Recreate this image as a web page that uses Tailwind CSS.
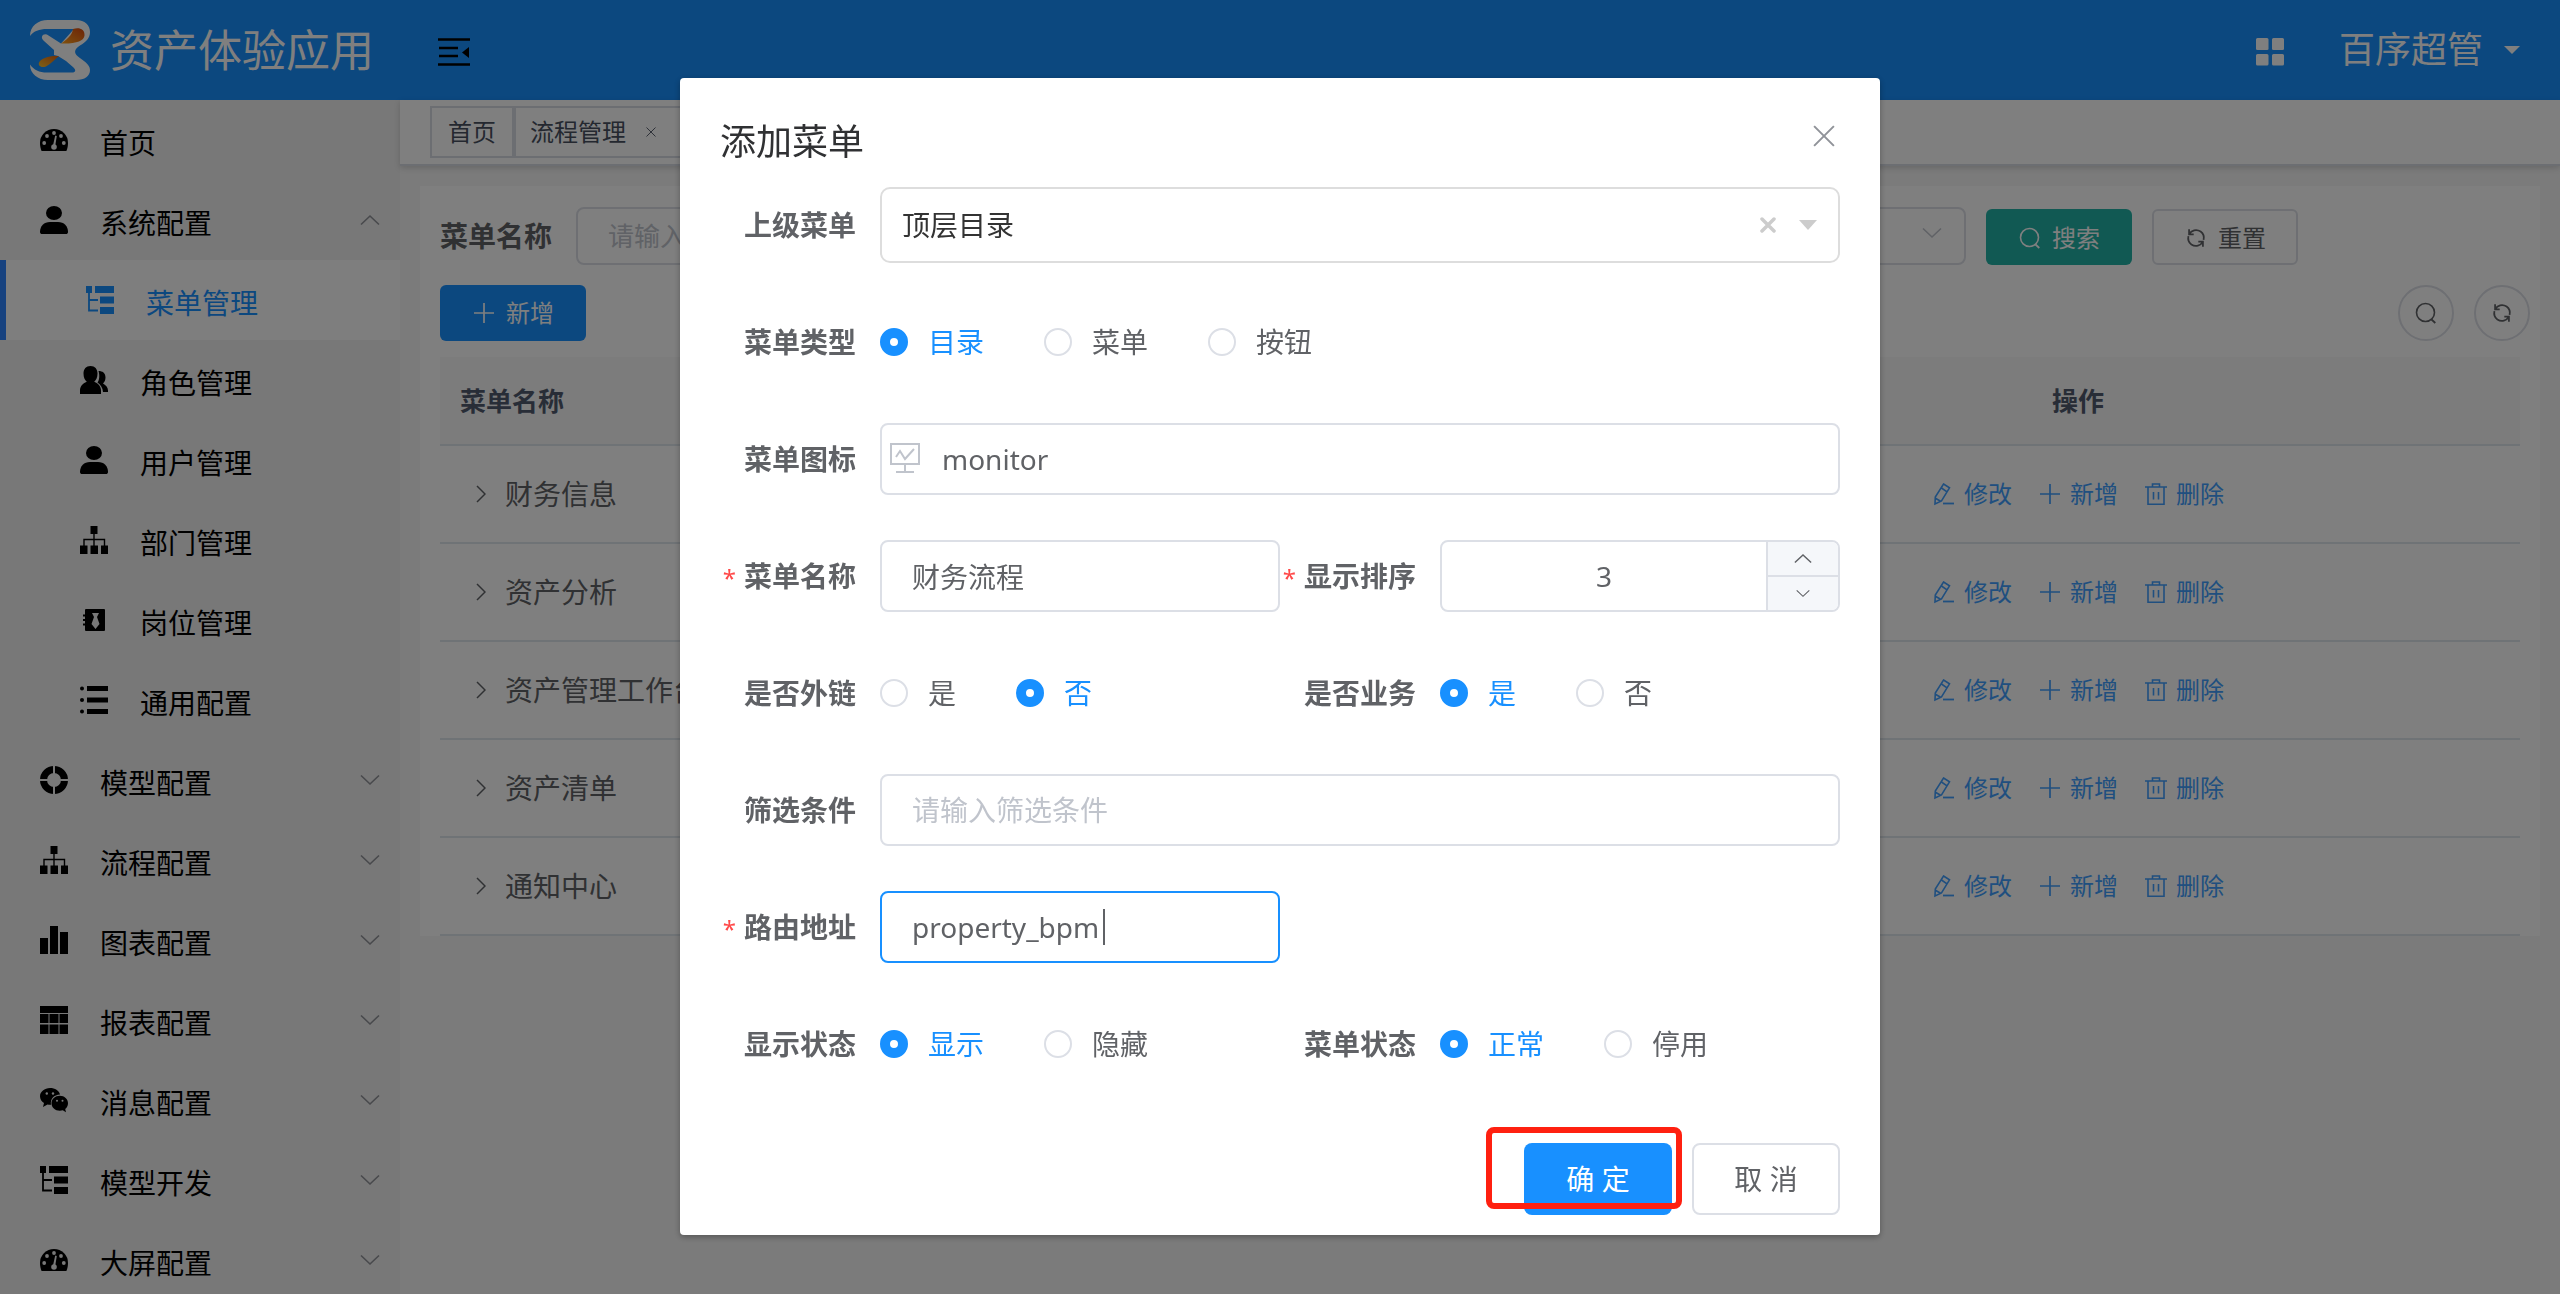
<!DOCTYPE html>
<html lang="zh-CN">
<head>
    <meta charset="UTF-8">
    <meta name="viewport" content="width=device-width, initial-scale=1.0">
    <title>资产体验应用</title>
    <script src="https://cdn.jsdelivr.net/npm/@tailwindcss/browser@4"></script>
</head>
<body class="h-screen overflow-hidden flex flex-col bg-[#f6f6f6] font-['Noto_Sans','Noto_Sans_CJK_SC',sans-serif] text-[28px] leading-10 text-[#606266]">

    <!-- icon sprite -->
    <svg class="hidden" aria-hidden="true">
        <symbol id="i-dashboard" viewBox="0 0 28 28">
            <path fill="currentColor" d="M14 3A14 14 0 0 0 0 17c0 3 .6 5.800 1.600 8h24.800c1-2.200 1.600-5 1.600-8A14 14 0 0 0 14 3z"/>
            <g fill="#f0f0f0"><circle cx="14" cy="7" r="1.900"/><circle cx="7" cy="10" r="1.900"/><circle cx="21" cy="10" r="1.900"/><circle cx="4.200" cy="17" r="1.900"/><circle cx="23.800" cy="17" r="1.900"/><circle cx="14" cy="21" r="2.800"/><path d="M15.200 9.500l1.600.4-1.600 10-2.200-.4z"/></g>
        </symbol>
        <symbol id="i-user" viewBox="0 0 28 28">
            <ellipse cx="14" cy="7" rx="8" ry="7" fill="currentColor"/><path fill="currentColor" d="M0 26c0-6 4-10 10-10h8c6 0 10 4 10 10 0 1.400-1 2-2 2H2c-1 0-2-.6-2-2z"/>
        </symbol>
        <symbol id="i-peoples" viewBox="0 0 28 28">
            <path fill="currentColor" d="M10.500 0C6 0 3.500 3 3.500 7.500c0 3.800 1.300 6.800 3.300 8.200C2.500 17.500 0 20.500 0 24.500V28h21v-3.500c0-4-2.500-7-6.800-8.800 2-1.400 3.300-4.400 3.300-8.200C17.500 3 15 0 10.500 0zM18.500 5c4 0 7 2 7 6.500 0 2.500-1 4.500-2.500 6 3 1.800 5 4 5 7V26h-5c-.2-4-2.500-7.500-5.500-9.500 2-2.500 2.300-7.500 1-11.500z"/>
        </symbol>
        <symbol id="i-tree" viewBox="0 0 28 28">
            <path fill="currentColor" d="M10.500 0h7v8h-7zM0 19.500h7.500V28H0zM10.500 19.500H18V28h-7.500zM21 19.500h7V28h-7z"/><path fill="none" stroke="currentColor" stroke-width="1.400" d="M14 8v12M4 20v-6.500h20.500V20"/>
        </symbol>
        <symbol id="i-post" viewBox="0 0 28 28">
            <rect x="5" y="3" width="20" height="22" rx="1" fill="currentColor"/><path stroke="currentColor" stroke-width="2" d="M3 9.500h4M3 14h4M3 18.500h4"/><path fill="#f0f0f0" d="M12 7h7l-2 4 2.500 7-4 5-4-5L14 11z"/>
        </symbol>
        <symbol id="i-list" viewBox="0 0 28 28">
            <path fill="currentColor" d="M7 0h21v5H7zM7 11.500h21v5H7zM7 23h21v5H7z"/><circle cx="2" cy="2.500" r="2" fill="currentColor"/><circle cx="2" cy="14" r="2" fill="currentColor"/><circle cx="2" cy="25.500" r="2" fill="currentColor"/>
        </symbol>
        <symbol id="i-ring" viewBox="0 0 28 28">
            <circle cx="14" cy="14" r="10.500" fill="none" stroke="currentColor" stroke-width="7"/><path stroke="#f0f0f0" stroke-width="2" d="M14 0v28M0 14h28"/>
        </symbol>
        <symbol id="i-chart" viewBox="0 0 28 28">
            <path fill="currentColor" d="M0 12h8v16H0zM10 0h8v28h-8zM20 6h8v22h-8z"/>
        </symbol>
        <symbol id="i-table" viewBox="0 0 28 28">
            <path fill="currentColor" d="M0 0h28v7H0zM0 8h8.500v9H0zM9.500 8h9v9h-9zM19.500 8H28v9h-8.500zM0 18.500h8.500V28H0zM9.500 18.500h9V28h-9zM19.500 18.500H28V28h-8.500z"/>
        </symbol>
        <symbol id="i-wechat" viewBox="0 0 28 28">
            <path fill="currentColor" d="M10 2C4.500 2 0 5.700 0 10.300c0 3 1.600 5.300 4 6.700l-1 4 4.500-2.600c1.200.3 2.300.4 3.500.3C10 13 14 8.800 20 8.500 19 4.500 15 2 10 2z"/><path fill="currentColor" d="M19.800 9.800c-4.600 0-8.300 3.300-8.300 7.500s3.700 7.500 8.300 7.500c1 0 2-.2 3-.5l3.200 2-.8-3.200c1.700-1.400 2.800-3.500 2.800-5.800 0-4.200-3.600-7.500-8.200-7.500z"/>
            <g fill="#f0f0f0"><circle cx="6.800" cy="7.500" r="1.200"/><circle cx="13" cy="7.500" r="1.200"/><circle cx="17" cy="14.800" r="1"/><circle cx="22.500" cy="14.800" r="1"/></g>
        </symbol>
        <symbol id="i-treetable" viewBox="0 0 28 28">
            <path fill="currentColor" d="M0 0h6v7H0zM9 0h19v7H9zM14 10.500h14v7H14zM14 21h14v7H14z"/><path fill="none" stroke="currentColor" stroke-width="1.800" d="M3 6v18.500h9M3 14h9"/>
        </symbol>
        <symbol id="i-search" viewBox="0 0 24 24">
            <circle cx="11.500" cy="11.500" r="9" fill="none" stroke="currentColor" stroke-width="1.600"/><path stroke="currentColor" stroke-width="1.800" d="M17.500 18.500l3.800 3.500"/>
        </symbol>
        <symbol id="i-refresh" viewBox="-1 -1 26 26">
            <path fill="none" stroke="currentColor" stroke-width="1.900" d="M4.500 2.500V8h5M4.500 8C7 3.500 12.500 2 17 5c3 2.200 4 5.500 3.200 9M19.500 21.500V16h-5M19.500 16C17 20.500 11.500 22 7 19c-3-2.200-4-5.500-3.200-9"/>
        </symbol>
        <symbol id="i-plus" viewBox="0 0 24 24">
            <path stroke="currentColor" stroke-width="1.700" d="M12 2v20M2 12h20"/>
        </symbol>
        <symbol id="i-edit" viewBox="0 0 24 24">
            <path fill="none" stroke="currentColor" stroke-width="1.600" d="M11.500 2l6 3.800-8 13.200-6.500 3 .3-7zM9.500 6l5.500 3.800M3 16l6 3.500"/><path stroke="currentColor" stroke-width="1.800" d="M11 21.500h11"/>
        </symbol>
        <symbol id="i-delete" viewBox="0 0 24 24">
            <path fill="none" stroke="currentColor" stroke-width="1.600" d="M1 5h22M8.500 5V2h7v3M4 5v17.200h16V5M9.500 10v7.500M14.500 10v7.500"/>
        </symbol>
        <symbol id="i-down" viewBox="0 0 20 12">
            <path fill="none" stroke="currentColor" stroke-width="1.600" d="M1 1.500l9 8.500 9-8.500"/>
        </symbol>
        <symbol id="i-up" viewBox="0 0 20 12">
            <path fill="none" stroke="currentColor" stroke-width="1.600" d="M1 10.500L10 2l9 8.500"/>
        </symbol>
        <symbol id="i-right" viewBox="0 0 10 18">
            <path fill="none" stroke="currentColor" stroke-width="1.500" d="M1 1l8 8-8 8"/>
        </symbol>
        <symbol id="i-close" viewBox="0 0 20 20">
            <path fill="none" stroke="currentColor" stroke-width="1.800" d="M1 1l18 18M19 1L1 19"/>
        </symbol>
    </svg>

    <header class="h-[100px] shrink-0 bg-[#1890ff] text-white flex items-center pl-[30px] pr-10">
        <svg class="w-[60px] h-[60px]" viewBox="0 0 60 60">
            <defs>
                <linearGradient id="g1" x1="0" y1="1" x2="1" y2="0"><stop offset="0" stop-color="#ffa41e"/><stop offset="1" stop-color="#d9480f"/></linearGradient>
                <linearGradient id="g2" x1="0" y1="1" x2="1" y2="0"><stop offset="0" stop-color="#ffc42e"/><stop offset="1" stop-color="#e0600f"/></linearGradient>
            </defs>
            <path fill="#fff" d="M0 16C0 6 8 0 18 0h28c9 0 14 5 14 12 0 6-4 10-10 13.500-5 3-7 7-2 11C53 40.500 60 44 60 50c0 6-5 10-14 10H18C8 60 0 54 0 44.500 4 50 9 52.500 17 52.500h25c4 0 4-2.500 1.500-5L36 41l-8-5-4-1 0-5-10-9c-5-4 0-9 4.500-5.500L31 23.500 44 9H17C9 9 4 11 0 16z"/>
            <path fill="url(#g1)" d="M31 23.500C36 20 42 16 43 9c6-2 12 0 11.500 6.500C54 21 46 24 31 23.500z"/>
            <path fill="url(#g2)" d="M29 36c-8-.5-15 1-19 5-3.500 4 1 7.500 6 5.500 5-2.500 8-6.500 13-10.500z"/>
        </svg>
        <span class="ml-5 text-[44px] leading-[60px]">资产体验应用</span>
        <button class="ml-[64px] pt-1" aria-label="收起菜单">
            <svg class="w-8 h-7 text-black" viewBox="0 0 32 28"><path stroke="currentColor" stroke-width="2.600" d="M0 1.500h32M1 10h19M1 18h19M0 26.500h32"/><path fill="currentColor" d="M31 9v11l-7-5.500z"/></svg>
        </button>
        <button class="ml-auto pt-1" aria-label="应用">
            <svg class="w-7 h-7" viewBox="0 0 28 28"><path fill="currentColor" d="M1.500 0H11q1.500 0 1.500 1.500V11q0 1-1.500 1H1.500Q0 12 0 11V1.500Q0 0 1.500 0zM17.500 0H26.500Q28 0 28 1.500V11q0 1-1.500 1h-9Q16 12 16 11V1.500Q16 0 17.500 0zM1.500 16H11q1.500 0 1.500 1.500V26q0 1.500-1.500 1.500H1.500Q0 27.500 0 26v-8.500Q0 16 1.500 16zM17.500 16h9q1.500 0 1.500 1.500V26q0 1.500-1.500 1.500h-9Q16 27.500 16 26v-8.500q0-1.500 1.500-1.500z"/></svg>
        </button>
        <button class="ml-[55px] flex items-center gap-[21px] text-[36px] leading-[50px]">
            百序超管
            <svg class="w-4 h-2" viewBox="0 0 16 8"><path fill="currentColor" d="M0 0h16L8 8z"/></svg>
        </button>
    </header>

    <div class="flex flex-1 min-h-0">
        <!-- sidebar -->
        <nav class="w-[400px] shrink-0 overflow-hidden bg-[#f0f0f0] text-black [&_a]:pt-1.5 [&_svg]:mb-1.5">
            <a href="#" class="flex items-center h-20 pl-10 pr-5"><svg class="w-7 h-7 mr-8"><use href="#i-dashboard"/></svg>首页</a>
            <a href="#" class="flex items-center h-20 pl-10 pr-5"><svg class="w-7 h-7 mr-8"><use href="#i-user"/></svg>系统配置<svg class="w-5 h-3 ml-auto text-[#909399]"><use href="#i-up"/></svg></a>
            <a href="#" class="flex items-center h-20 pl-20 border-l-6 border-[#2f84ff] bg-[#fcfcfc] text-[#1890ff]"><svg class="w-7 h-7 mr-8"><use href="#i-treetable"/></svg>菜单管理</a>
            <a href="#" class="flex items-center h-20 pl-20"><svg class="w-7 h-7 mr-8"><use href="#i-peoples"/></svg>角色管理</a>
            <a href="#" class="flex items-center h-20 pl-20"><svg class="w-7 h-7 mr-8"><use href="#i-user"/></svg>用户管理</a>
            <a href="#" class="flex items-center h-20 pl-20"><svg class="w-7 h-7 mr-8"><use href="#i-tree"/></svg>部门管理</a>
            <a href="#" class="flex items-center h-20 pl-20"><svg class="w-7 h-7 mr-8"><use href="#i-post"/></svg>岗位管理</a>
            <a href="#" class="flex items-center h-20 pl-20"><svg class="w-7 h-7 mr-8"><use href="#i-list"/></svg>通用配置</a>
            <a href="#" class="flex items-center h-20 pl-10 pr-5"><svg class="w-7 h-7 mr-8"><use href="#i-ring"/></svg>模型配置<svg class="w-5 h-3 ml-auto text-[#909399]"><use href="#i-down"/></svg></a>
            <a href="#" class="flex items-center h-20 pl-10 pr-5"><svg class="w-7 h-7 mr-8"><use href="#i-tree"/></svg>流程配置<svg class="w-5 h-3 ml-auto text-[#909399]"><use href="#i-down"/></svg></a>
            <a href="#" class="flex items-center h-20 pl-10 pr-5"><svg class="w-7 h-7 mr-8"><use href="#i-chart"/></svg>图表配置<svg class="w-5 h-3 ml-auto text-[#909399]"><use href="#i-down"/></svg></a>
            <a href="#" class="flex items-center h-20 pl-10 pr-5"><svg class="w-7 h-7 mr-8"><use href="#i-table"/></svg>报表配置<svg class="w-5 h-3 ml-auto text-[#909399]"><use href="#i-down"/></svg></a>
            <a href="#" class="flex items-center h-20 pl-10 pr-5"><svg class="w-7 h-7 mr-8"><use href="#i-wechat"/></svg>消息配置<svg class="w-5 h-3 ml-auto text-[#909399]"><use href="#i-down"/></svg></a>
            <a href="#" class="flex items-center h-20 pl-10 pr-5"><svg class="w-7 h-7 mr-8"><use href="#i-treetable"/></svg>模型开发<svg class="w-5 h-3 ml-auto text-[#909399]"><use href="#i-down"/></svg></a>
            <a href="#" class="flex items-center h-20 pl-10 pr-5"><svg class="w-7 h-7 mr-8"><use href="#i-dashboard"/></svg>大屏配置<svg class="w-5 h-3 ml-auto text-[#909399]"><use href="#i-down"/></svg></a>
        </nav>

        <main class="flex-1 min-w-0">
            <!-- opened tabs -->
            <div class="h-[66px] flex items-center pl-[30px] pb-px bg-white border-b-2 border-[#d8dce5] shadow-[0_2px_6px_rgba(0,0,0,0.16)] text-2xl text-[#495060]">
                <a href="#" class="h-[52px] flex items-center px-4 border-2 border-[#d8dce5]">首页</a>
                <a href="#" class="h-[52px] w-[180px] flex items-center pl-[14px] border-2 border-[#d8dce5]">流程管理<svg class="w-[10px] h-[10px] ml-[20px]"><use href="#i-close"/></svg></a>
            </div>

            <section class="mx-5 mt-5 px-5 pt-[21px] bg-white">
                <div class="flex items-end gap-5 mb-5">
                    <div class="flex-1 max-w-[1526px] flex items-center justify-between">
                        <div class="flex items-center gap-6">
                            <label for="q-name" class="font-bold">菜单名称</label>
                            <input id="q-name" placeholder="请输入菜单名称" class="w-[430px] h-[58px] px-[30px] border-2 border-[#dcdfe6] rounded-lg text-[26px] placeholder:text-[#c0c4cc]">
                        </div>
                        <div class="relative">
                            <select aria-label="状态" class="block appearance-none w-[480px] h-[58px] border-2 border-[#dcdfe6] rounded-lg text-[26px]"></select>
                            <svg class="absolute right-6 top-[20px] w-5 h-3 text-[#c0c4cc]"><use href="#i-down"/></svg>
                        </div>
                    </div>
                    <button class="w-[146px] h-14 pt-0.5 flex items-center justify-center gap-[10px] rounded-md bg-[#22b2a6] text-white text-2xl"><svg class="w-6 h-6"><use href="#i-search"/></svg>搜索</button>
                    <button class="w-[146px] h-14 pt-0.5 flex items-center justify-center gap-[10px] rounded-md border-2 border-[#dcdfe6] text-2xl"><svg class="w-6 h-6"><use href="#i-refresh"/></svg>重置</button>
                </div>

                <div class="flex items-center mb-4 -mr-[10px]">
                    <button class="w-[146px] h-14 flex items-center justify-center gap-[10px] rounded-md bg-[#1890ff] text-white text-2xl"><svg class="w-6 h-6"><use href="#i-plus"/></svg>新增</button>
                    <button aria-label="搜索" class="ml-auto w-14 h-14 flex items-center justify-center rounded-full border-2 border-[#dcdfe6]"><svg class="w-6 h-6"><use href="#i-search"/></svg></button>
                    <button aria-label="刷新" class="ml-5 w-14 h-14 flex items-center justify-center rounded-full border-2 border-[#dcdfe6]"><svg class="w-6 h-6"><use href="#i-refresh"/></svg></button>
                </div>

                <table class="w-full table-fixed">
                    <colgroup><col><col class="w-[884px]"></colgroup>
                    <thead>
                        <tr class="h-[88px] bg-[#f8f8f9] border-b-2 border-[#dfe6ec] text-[26px] text-[#515a6e]">
                            <th class="pl-5 text-left font-bold">菜单名称</th>
                            <th class="font-bold">操作</th>
                        </tr>
                    </thead>
                    <tbody id="rows"></tbody>
                </table>
            </section>
        </main>
    </div>

    <!-- dialog -->
    <div class="fixed inset-0 bg-black/50 flex justify-center items-start pt-[78px]">
        <div role="dialog" aria-labelledby="dlg-title" class="w-[1200px] bg-white rounded shadow-[0_2px_6px_rgba(0,0,0,0.3)] px-10 pb-5">
            <div class="flex items-center justify-between h-[111px] pt-4 pr-[5px]">
                <h2 id="dlg-title" class="text-[36px] leading-[48px] text-[#303133]">添加菜单</h2>
                <button aria-label="关闭" class="mb-3"><svg class="w-[22px] h-[22px] text-[#909399]"><use href="#i-close"/></svg></button>
            </div>

            <form class="grid grid-cols-2 auto-rows-[72px] gap-y-[45px]">
                <div class="col-span-2 flex items-center">
                    <label for="parent" class="w-40 pr-6 text-right font-bold">上级菜单</label>
                    <div class="relative flex-1">
                        <select id="parent" class="appearance-none block w-full h-[76px] pl-5 border-2 border-[#ddd] rounded-[10px] bg-white text-[#333]"><option>顶层目录</option></select>
                        <svg class="absolute right-16 top-[30px] w-4 h-4" viewBox="0 0 16 16"><path stroke="#ccc" stroke-width="3.500" stroke-linecap="round" d="M2 2l12 12M14 2L2 14"/></svg>
                        <svg class="absolute right-[23px] top-[33px] w-[18px] h-[10px]" viewBox="0 0 18 10"><path fill="#ccc" d="M0 0h18L9 10z"/></svg>
                    </div>
                </div>

                <div class="col-span-2 flex items-center" role="radiogroup" aria-labelledby="l-type">
                    <span id="l-type" class="w-40 pr-6 text-right font-bold">菜单类型</span>
                    <div class="flex gap-[60px]">
                        <label class="flex items-center gap-5 has-checked:text-[#1890ff]"><input type="radio" name="type" checked class="appearance-none w-7 h-7 rounded-full border-2 border-[#dcdfe6] checked:border-10 checked:border-[#1890ff]">目录</label>
                        <label class="flex items-center gap-5 has-checked:text-[#1890ff]"><input type="radio" name="type" class="appearance-none w-7 h-7 rounded-full border-2 border-[#dcdfe6] checked:border-10 checked:border-[#1890ff]">菜单</label>
                        <label class="flex items-center gap-5 has-checked:text-[#1890ff]"><input type="radio" name="type" class="appearance-none w-7 h-7 rounded-full border-2 border-[#dcdfe6] checked:border-10 checked:border-[#1890ff]">按钮</label>
                    </div>
                </div>

                <div class="col-span-2 flex items-center">
                    <label for="icon" class="w-40 pr-6 text-right font-bold">菜单图标</label>
                    <div class="relative flex-1">
                        <input id="icon" value="monitor" class="block w-full h-[72px] pl-[60px] border-2 border-[#dcdfe6] rounded-lg">
                        <svg class="absolute left-[10px] top-5 w-[30px] h-[30px] text-[#c0c4cc]" viewBox="0 0 30 30"><path fill="none" stroke="currentColor" stroke-width="2" d="M1 1h28v20H1zM15 21v8M6 29h18M6 14l4-6 5 8 9-10"/></svg>
                    </div>
                </div>

                <div class="flex items-center">
                    <label for="name" class="w-40 pr-6 text-right font-bold"><span class="mr-2 text-2xl font-normal text-[#ff4949]">*</span>菜单名称</label>
                    <input id="name" value="财务流程" class="flex-1 min-w-0 h-[72px] px-[30px] border-2 border-[#dcdfe6] rounded-lg">
                </div>
                <div class="flex items-center">
                    <label for="sort" class="w-40 pr-6 text-right font-bold"><span class="mr-2 text-2xl font-normal text-[#ff4949]">*</span>显示排序</label>
                    <div class="flex-1 flex h-[72px] border-2 border-[#dcdfe6] rounded-lg overflow-hidden">
                        <input id="sort" value="3" class="flex-1 min-w-0 text-center">
                        <div class="w-[72px] flex flex-col border-l-2 border-[#dcdfe6] bg-[#f5f7fa]">
                            <button type="button" aria-label="增加" class="flex-1 flex items-center justify-center border-b-2 border-[#dcdfe6]"><svg class="w-[18px] h-[11px]"><use href="#i-up"/></svg></button>
                            <button type="button" aria-label="减少" class="flex-1 flex items-center justify-center"><svg class="w-[14px] h-[9px]"><use href="#i-down"/></svg></button>
                        </div>
                    </div>
                </div>

                <div class="flex items-center" role="radiogroup" aria-labelledby="l-link">
                    <span id="l-link" class="w-40 pr-6 text-right font-bold">是否外链</span>
                    <div class="flex gap-[60px]">
                        <label class="flex items-center gap-5 has-checked:text-[#1890ff]"><input type="radio" name="link" class="appearance-none w-7 h-7 rounded-full border-2 border-[#dcdfe6] checked:border-10 checked:border-[#1890ff]">是</label>
                        <label class="flex items-center gap-5 has-checked:text-[#1890ff]"><input type="radio" name="link" checked class="appearance-none w-7 h-7 rounded-full border-2 border-[#dcdfe6] checked:border-10 checked:border-[#1890ff]">否</label>
                    </div>
                </div>
                <div class="flex items-center" role="radiogroup" aria-labelledby="l-biz">
                    <span id="l-biz" class="w-40 pr-6 text-right font-bold">是否业务</span>
                    <div class="flex gap-[60px]">
                        <label class="flex items-center gap-5 has-checked:text-[#1890ff]"><input type="radio" name="biz" checked class="appearance-none w-7 h-7 rounded-full border-2 border-[#dcdfe6] checked:border-10 checked:border-[#1890ff]">是</label>
                        <label class="flex items-center gap-5 has-checked:text-[#1890ff]"><input type="radio" name="biz" class="appearance-none w-7 h-7 rounded-full border-2 border-[#dcdfe6] checked:border-10 checked:border-[#1890ff]">否</label>
                    </div>
                </div>

                <div class="col-span-2 flex items-center">
                    <label for="filter" class="w-40 pr-6 text-right font-bold">筛选条件</label>
                    <input id="filter" placeholder="请输入筛选条件" class="flex-1 h-[72px] px-[30px] border-2 border-[#dcdfe6] rounded-lg placeholder:text-[#c0c4cc]">
                </div>

                <div class="flex items-center">
                    <label for="path" class="w-40 pr-6 text-right font-bold"><span class="mr-2 text-2xl font-normal text-[#ff4949]">*</span>路由地址</label>
                    <div class="relative flex-1">
                        <input id="path" value="property_bpm" class="block w-full h-[72px] px-[30px] border-2 border-[#1890ff] rounded-lg">
                        <span class="absolute left-[223px] top-[18px] w-0.5 h-9 bg-[#606266]"></span>
                    </div>
                </div>

                <div class="col-start-1 flex items-center" role="radiogroup" aria-labelledby="l-show">
                    <span id="l-show" class="w-40 pr-6 text-right font-bold">显示状态</span>
                    <div class="flex gap-[60px]">
                        <label class="flex items-center gap-5 has-checked:text-[#1890ff]"><input type="radio" name="show" checked class="appearance-none w-7 h-7 rounded-full border-2 border-[#dcdfe6] checked:border-10 checked:border-[#1890ff]">显示</label>
                        <label class="flex items-center gap-5 has-checked:text-[#1890ff]"><input type="radio" name="show" class="appearance-none w-7 h-7 rounded-full border-2 border-[#dcdfe6] checked:border-10 checked:border-[#1890ff]">隐藏</label>
                    </div>
                </div>
                <div class="flex items-center" role="radiogroup" aria-labelledby="l-status">
                    <span id="l-status" class="w-40 pr-6 text-right font-bold">菜单状态</span>
                    <div class="flex gap-[60px]">
                        <label class="flex items-center gap-5 has-checked:text-[#1890ff]"><input type="radio" name="status" checked class="appearance-none w-7 h-7 rounded-full border-2 border-[#dcdfe6] checked:border-10 checked:border-[#1890ff]">正常</label>
                        <label class="flex items-center gap-5 has-checked:text-[#1890ff]"><input type="radio" name="status" class="appearance-none w-7 h-7 rounded-full border-2 border-[#dcdfe6] checked:border-10 checked:border-[#1890ff]">停用</label>
                    </div>
                </div>
            </form>

            <div class="flex justify-end gap-5 mt-[63px]">
                <div class="relative">
                    <button class="w-[148px] h-[72px] rounded-lg bg-[#1890ff] text-white">确 定</button>
                    <span class="absolute -left-[38px] -top-4 w-[196px] h-[82px] border-6 border-[#ff2010] rounded-lg pointer-events-none"></span>
                </div>
                <button class="w-[148px] h-[72px] rounded-lg border-2 border-[#dcdfe6]">取 消</button>
            </div>
        </div>
    </div>

    <script>
        const names = ['财务信息', '资产分析', '资产管理工作台', '资产清单', '通知中心'];
        document.getElementById('rows').innerHTML = names.map(name => `
            <tr class="h-[98px] border-b-2 border-[#dfe6ec]">
                <td class="pl-9"><span class="flex items-center gap-[19px]"><svg class="w-[10px] h-[18px]"><use href="#i-right"/></svg>${name}</span></td>
                <td>
                    <div class="flex justify-center gap-[26px] text-2xl text-[#409eff]">
                        <button class="flex items-center gap-2"><svg class="w-6 h-6"><use href="#i-edit"/></svg>修改</button>
                        <button class="flex items-center gap-2"><svg class="w-6 h-6"><use href="#i-plus"/></svg>新增</button>
                        <button class="flex items-center gap-2"><svg class="w-6 h-6"><use href="#i-delete"/></svg>删除</button>
                    </div>
                </td>
            </tr>`).join('');
    </script>
</body>
</html>
